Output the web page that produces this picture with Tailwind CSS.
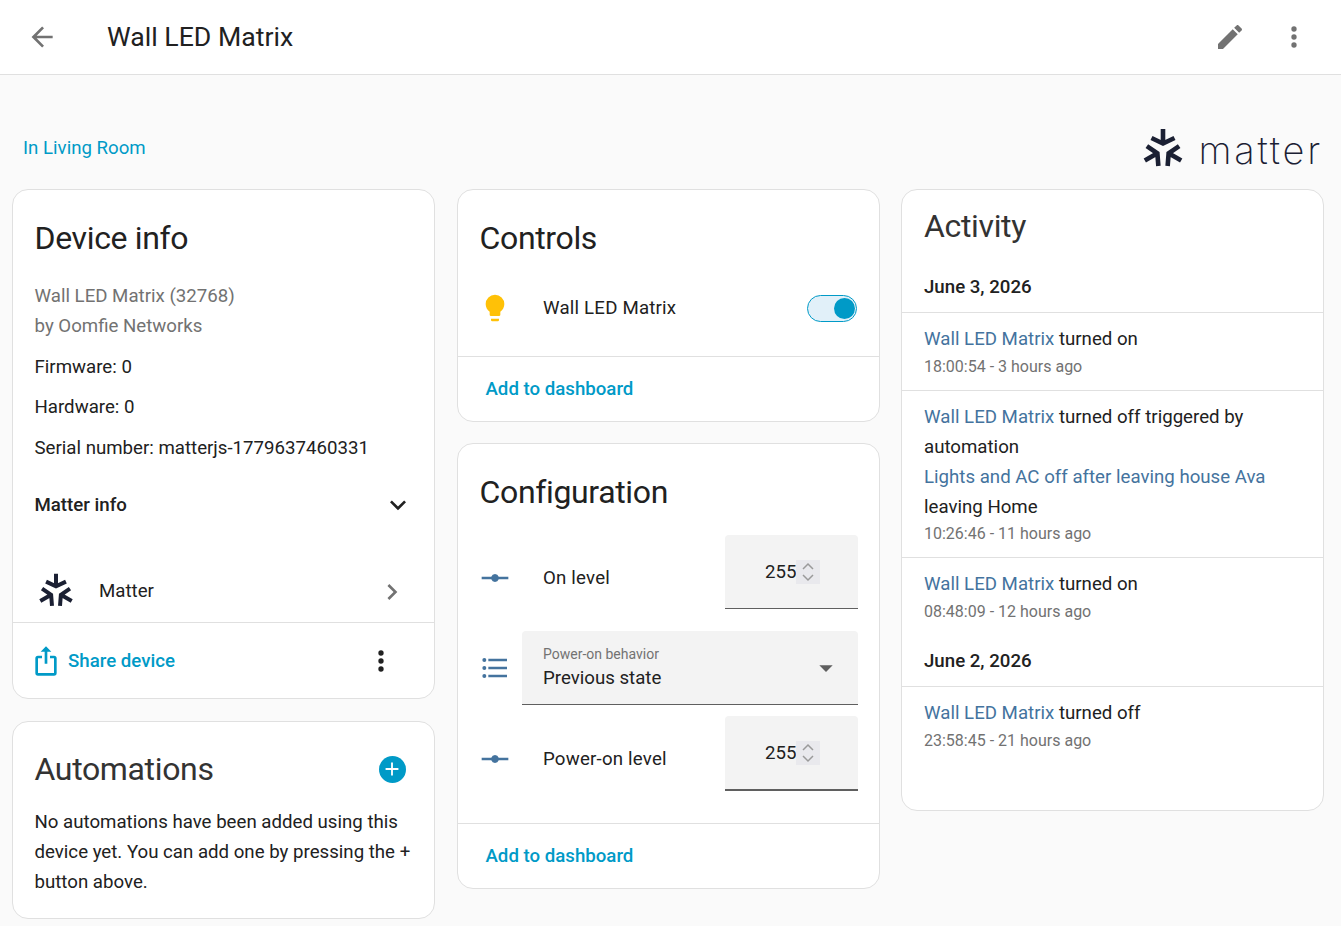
<!DOCTYPE html>
<html>
<head>
  <meta charset="UTF-8" />
  <meta name="viewport" content="width=device-width, initial-scale=1.0" />
  <script src="https://cdn.jsdelivr.net/npm/@tailwindcss/browser@4"></script>
  <title>Wall LED Matrix</title>
</head>
<body class="h-[926px] overflow-hidden bg-[#fafafa] font-['Roboto',sans-serif] text-[18.67px] leading-[30px] text-[#212121]">

  <!-- top bar -->
  <header class="h-[75px] bg-white border-b border-[#e0e0e0] flex items-center">
    <svg class="ml-[26px] w-8 h-8 fill-[#727272]" viewBox="0 0 24 24"><path d="M20 11v2H8l5.500 5.500-1.420 1.420L4.160 12l7.920-7.920L13.500 5.500 8 11h12z"/></svg>
    <h1 class="ml-[49px] text-[26.67px] leading-8 font-normal">Wall LED Matrix</h1>
    <svg class="ml-auto w-8 h-8 fill-[#727272]" viewBox="0 0 24 24"><path d="M20.710 7.040c.39-.39.39-1.040 0-1.410l-2.340-2.340c-.37-.39-1.020-.39-1.410 0l-1.840 1.830 3.750 3.750M3 17.250V21h3.750L17.810 9.930l-3.750-3.750L3 17.250z"/></svg>
    <svg class="ml-[32px] mr-[31px] w-8 h-8 fill-[#727272]" viewBox="0 0 24 24"><path d="M12 16a2 2 0 1 1 0 4 2 2 0 0 1 0-4zm0-6a2 2 0 1 1 0 4 2 2 0 0 1 0-4zm0-6a2 2 0 1 1 0 4 2 2 0 0 1 0-4z"/></svg>
  </header>

  <!-- area line and brand -->
  <div class="h-[114px] flex items-end justify-between pl-[23px] pr-[18px]">
    <a class="mb-[26px] text-[#009ac7]">In Living Room</a>
    <div class="mb-[17px] flex items-center">
      <svg class="w-[44px] h-[44px] fill-none stroke-[#1b2033] stroke-[4.6]" viewBox="-22 -22 44 44">
        <path d="M0-21V-6.500M-11.500-12 0-6.500 11.500-12"/>
        <path transform="rotate(120)" d="M0-21V-6.500M-11.500-12 0-6.500 11.500-12"/>
        <path transform="rotate(240)" d="M0-21V-6.500M-11.500-12 0-6.500 11.500-12"/>
      </svg>
      <span class="ml-[13px] font-['Inter',sans-serif] font-extralight text-[38px] leading-10 tracking-[2.8px] text-[#1b2033]">matter</span>
    </div>
  </div>

  <main class="grid grid-cols-[423px_423px_423px] gap-x-[22px] pl-3 items-start">

    <!-- left column -->
    <div class="flex flex-col gap-[22px]">
      <section class="h-[510px] bg-white border border-[#e0e0e0] rounded-2xl flex flex-col">
        <div class="px-[21.5px]">
          <h2 class="mt-[28px] text-[32px] leading-10 tracking-[-0.35px] font-normal">Device info</h2>
          <p class="mt-[23px] text-[#727272]">Wall LED Matrix (32768)<br />by Oomfie Networks</p>
          <p class="mt-[11px]">Firmware: 0</p>
          <p class="mt-[10px]">Hardware: 0</p>
          <p class="mt-[11px]">Serial number: matterjs-1779637460331</p>
          <div class="mt-[26px] flex items-center justify-between pr-[2px]">
            <span class="font-medium">Matter info</span>
            <svg class="w-[32px] h-[32px] -mr-[3px] fill-[#212121]" viewBox="0 0 24 24"><path d="M7.410 8.580 12 13.170l4.590-4.590L18 10l-6 6-6-6 1.410-1.420z"/></svg>
          </div>
        </div>
        <div class="mt-[41px] h-[61px] border-b border-[#e0e0e0] flex items-center pl-[24px] pr-[26px]">
          <svg class="w-[38px] h-[38px] fill-none stroke-[#1b2033] stroke-[4.6]" viewBox="-22 -22 44 44">
            <path d="M0-21V-6.500M-11.500-12 0-6.500 11.500-12"/>
            <path transform="rotate(120)" d="M0-21V-6.500M-11.500-12 0-6.500 11.500-12"/>
            <path transform="rotate(240)" d="M0-21V-6.500M-11.500-12 0-6.500 11.500-12"/>
          </svg>
          <span class="ml-[24px] -mt-[2px]">Matter</span>
          <svg class="ml-auto w-8 h-8 fill-[#727272]" viewBox="0 0 24 24"><path d="M8.590 16.580 13.170 12 8.590 7.410 10 6l6 6-6 6-1.410-1.420z"/></svg>
        </div>
        <div class="flex-1 flex items-center pl-[17px] pr-[37px]">
          <svg class="w-8 h-8 fill-[#009ac7]" viewBox="0 0 24 24"><path d="M12 1 8 5h3v9h2V5h3l-4-4zm6 7h-3v2h3v11H6V10h3V8H6a2 2 0 0 0-2 2v11a2 2 0 0 0 2 2h12a2 2 0 0 0 2-2V10a2 2 0 0 0-2-2z"/></svg>
          <span class="ml-[6px] font-medium text-[#009ac7]">Share device</span>
          <svg class="ml-auto w-8 h-8 fill-[#212121]" viewBox="0 0 24 24"><path d="M12 16a2 2 0 1 1 0 4 2 2 0 0 1 0-4zm0-6a2 2 0 1 1 0 4 2 2 0 0 1 0-4zm0-6a2 2 0 1 1 0 4 2 2 0 0 1 0-4z"/></svg>
        </div>
      </section>

      <section class="h-[198px] bg-white border border-[#e0e0e0] rounded-2xl px-[21.5px]">
        <div class="mt-[27px] flex items-center justify-between">
          <h2 class="text-[32px] leading-10 tracking-[-0.35px] font-normal text-[#333]">Automations</h2>
          <span class="mr-[7px] w-[27px] h-[27px] rounded-full bg-[#009ac7] flex items-center justify-center">
            <svg class="w-[22px] h-[22px] fill-white" viewBox="0 0 24 24"><path d="M19 13h-6v6h-2v-6H5v-2h6V5h2v6h6v2z"/></svg>
          </span>
        </div>
        <p class="mt-[18px]">No automations have been added using this device yet. You can add one by pressing the + button above.</p>
      </section>
    </div>

    <!-- middle column -->
    <div class="flex flex-col gap-[21px]">
      <section class="h-[233px] bg-white border border-[#e0e0e0] rounded-2xl flex flex-col">
        <h2 class="mt-[28px] px-[21.5px] text-[32px] leading-10 tracking-[-0.35px] font-normal">Controls</h2>
        <div class="mt-[30px] h-[40px] flex items-center pl-[21px] pr-[22px]">
          <svg class="w-8 h-8 fill-[#ffc107]" viewBox="0 0 24 24"><path d="M12 2a7 7 0 0 0-7 7c0 2.380 1.190 4.470 3 5.740V17a1 1 0 0 0 1 1h6a1 1 0 0 0 1-1v-2.260c1.810-1.270 3-3.360 3-5.740a7 7 0 0 0-7-7zM9 21a1 1 0 0 0 1 1h4a1 1 0 0 0 1-1v-1H9v1z"/></svg>
          <span class="ml-[32px] tracking-[0.2px]">Wall LED Matrix</span>
          <span class="ml-auto w-[50px] h-[27px] rounded-full border border-[#009ac7] bg-[#e1f0f9] flex items-center justify-end pr-[1px]">
            <span class="w-[21px] h-[21px] rounded-full bg-[#009ac7]"></span>
          </span>
        </div>
        <div class="mt-[28px] flex-1 border-t border-[#e0e0e0] flex items-center pl-[27.5px]">
          <span class="font-medium text-[#009ac7]">Add to dashboard</span>
        </div>
      </section>

      <section class="h-[446px] bg-white border border-[#e0e0e0] rounded-2xl flex flex-col">
        <h2 class="mt-[28px] px-[21.5px] text-[32px] leading-10 tracking-[-0.35px] font-normal">Configuration</h2>
        <div class="mt-[23px] h-[74px] flex items-center pl-[21px] pr-[21px]">
          <svg class="mt-[11px] w-8 h-8 fill-[#44739e]" viewBox="0 0 24 24"><path d="M2 11h7.200a3 3 0 0 1 5.600 0H22v2h-7.200a3 3 0 0 1-5.600 0H2v-2z"/></svg>
          <span class="mt-[12px] ml-[32px] tracking-[0.2px]">On level</span>
          <div class="ml-auto w-[133px] h-full bg-[#f3f3f3] rounded-t border-b border-[#5f5f5f] flex items-center pl-[40px]">
            <span>255</span>
            <span class="w-[24px] h-[24px] bg-[#e9e9ed] flex items-center justify-center">
              <svg class="w-[14px] h-[20px] fill-none stroke-[#9a9a9a] stroke-[1.5]" viewBox="0 0 14 20"><path d="m2 7 5-5 5 5M2 13l5 5 5-5"/></svg>
            </span>
          </div>
        </div>
        <div class="mt-[22px] h-[74px] flex items-center pl-[21px] pr-[21px]">
          <svg class="w-8 h-8 fill-[#44739e]" viewBox="0 0 24 24"><path d="M7 5h14v2H7V5zm0 8v-2h14v2H7zM4 4.500A1.500 1.500 0 1 1 4 7.500 1.500 1.500 0 0 1 4 4.500zm0 6A1.500 1.500 0 1 1 4 13.500 1.500 1.500 0 0 1 4 10.500zM7 19v-2h14v2H7zm-3-2.500a1.500 1.500 0 1 1 0 3 1.500 1.500 0 0 1 0-3z"/></svg>
          <div class="ml-[11px] flex-1 h-full bg-[#f3f3f3] rounded-t border-b border-[#5f5f5f] flex items-center pl-[21px] pr-[21px]">
            <div class="flex-1 flex flex-col">
              <span class="text-[14px] leading-[20px] text-[#727272]">Power-on behavior</span>
              <span class="mt-[1px] leading-[26px]">Previous state</span>
            </div>
            <svg class="w-[32px] h-[32px] -mr-[5px] fill-[#5f5f5f]" viewBox="0 0 24 24"><path d="M7 10l5 5 5-5H7z"/></svg>
          </div>
        </div>
        <div class="mt-[11px] h-[75px] flex items-center pl-[21px] pr-[21px]">
          <svg class="mt-[10px] w-8 h-8 fill-[#44739e]" viewBox="0 0 24 24"><path d="M2 11h7.200a3 3 0 0 1 5.600 0H22v2h-7.200a3 3 0 0 1-5.600 0H2v-2z"/></svg>
          <span class="mt-[10px] ml-[32px] tracking-[0.2px]">Power-on level</span>
          <div class="ml-auto w-[133px] h-full bg-[#f3f3f3] rounded-t border-b-2 border-[#5f5f5f] flex items-center pl-[40px]">
            <span>255</span>
            <span class="w-[24px] h-[24px] bg-[#e9e9ed] flex items-center justify-center">
              <svg class="w-[14px] h-[20px] fill-none stroke-[#9a9a9a] stroke-[1.5]" viewBox="0 0 14 20"><path d="m2 7 5-5 5 5M2 13l5 5 5-5"/></svg>
            </span>
          </div>
        </div>
        <div class="mt-[32px] flex-1 border-t border-[#e0e0e0] flex items-center pl-[27.5px]">
          <span class="font-medium text-[#009ac7]">Add to dashboard</span>
        </div>
      </section>
    </div>

    <!-- right column -->
    <section class="-ml-px w-[423px] h-[622px] bg-white border border-[#e0e0e0] rounded-2xl flex flex-col">
      <h2 class="mt-[16px] px-[22px] text-[32px] leading-10 tracking-[-0.35px] font-normal text-[#333]">Activity</h2>
      <h3 class="mt-[26px] px-[22px] h-[40px] font-medium">June 3, 2026</h3>
      <div class="border-t border-[#e0e0e0] h-[78px] px-[22px] pt-[11px]">
        <p><span class="text-[#44739e]">Wall LED Matrix</span> turned on</p>
        <p class="mt-[1px] text-[16px] leading-[24px] text-[#727272]">18:00:54 - 3 hours ago</p>
      </div>
      <div class="border-t border-[#e0e0e0] h-[167px] px-[22px] pt-[11px]">
        <p><span class="text-[#44739e]">Wall LED Matrix</span> turned off triggered by<br />automation<br /><span class="text-[#44739e]">Lights and AC off after leaving house Ava</span><br />leaving Home</p>
        <p class="text-[16px] leading-[24px] text-[#727272]">10:26:46 - 11 hours ago</p>
      </div>
      <div class="border-t border-[#e0e0e0] h-[76px] px-[22px] pt-[11px]">
        <p><span class="text-[#44739e]">Wall LED Matrix</span> turned on</p>
        <p class="mt-[1px] text-[16px] leading-[24px] text-[#727272]">08:48:09 - 12 hours ago</p>
      </div>
      <h3 class="px-[22px] h-[53px] pt-[13px] font-medium">June 2, 2026</h3>
      <div class="border-t border-[#e0e0e0] px-[22px] pt-[11px]">
        <p><span class="text-[#44739e]">Wall LED Matrix</span> turned off</p>
        <p class="mt-[1px] text-[16px] leading-[24px] text-[#727272]">23:58:45 - 21 hours ago</p>
      </div>
    </section>
  </main>
</body>
</html>
